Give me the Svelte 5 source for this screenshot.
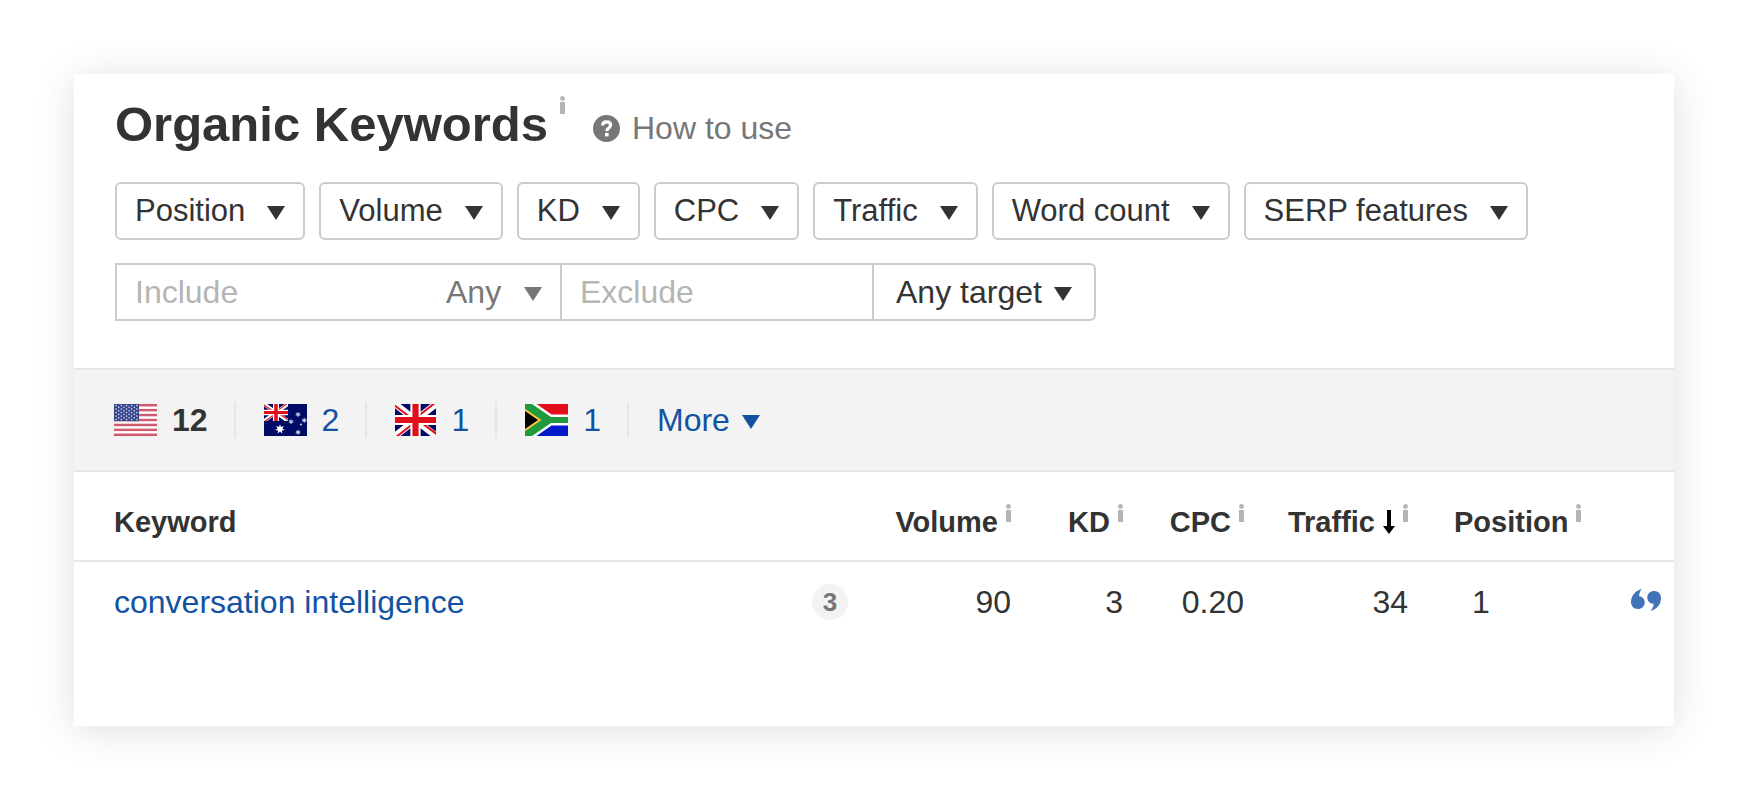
<script lang="ts">
  const filters = ['Position', 'Volume', 'KD', 'CPC', 'Traffic', 'Word count', 'SERP features']

  const countries = [
    { code: 'us', name: 'United States', count: 12 },
    { code: 'au', name: 'Australia', count: 2 },
    { code: 'gb', name: 'United Kingdom', count: 1 },
    { code: 'za', name: 'South Africa', count: 1 },
  ]

  const columns = ['Volume', 'KD', 'CPC', 'Traffic', 'Position']

  const rows = [
    { keyword: 'conversation intelligence', serp: 3, values: ['90', '3', '0.20', '34', '1'] },
  ]

  let country = $state('us')
  let include = $state('')
  let exclude = $state('')

  const stripes = [0, 2, 4, 6, 8, 10, 12]
  const stars = [0, 1, 2, 3, 4, 5, 6, 7, 8]
</script>

{#snippet caret()}
  <svg class="caret" viewBox="0 0 18 14" aria-hidden="true"><path d="M0 0h18L9 14z" /></svg>
{/snippet}

{#snippet info()}
  <svg class="info" viewBox="0 0 5 18" aria-hidden="true">
    <circle cx="2.5" cy="2.5" r="2.4" />
    <path d="M0 6h5v12H0z" />
  </svg>
{/snippet}

{#snippet unionJack()}
  <path fill="#000b66" d="M0 0h60v48H0z" />
  <path stroke="#fff" stroke-width="10" d="M0 0l60 48M60 0L0 48" />
  <path stroke="#e20f1b" stroke-width="3" d="M-1 2l31 24M29 22L59-2M31 22l31 24M31 26L1 50" />
  <path stroke="#fff" stroke-width="15" d="M30 0v48M0 24h60" />
  <path stroke="#e20f1b" stroke-width="9" d="M30 0v48M0 24h60" />
{/snippet}

{#snippet flag(code: string)}
  {#if code === 'us'}
    <svg class="flag" width="43" height="32" viewBox="0 0 43 32" aria-hidden="true">
      <path fill="#fff" d="M0 0h43v32H0z" />
      {#each stripes as n}
        <rect fill="#d0596b" y={(n * 32) / 13} width="43" height={32 / 13} />
      {/each}
      <path fill="#39458c" d="M0 0h25v17.2H0z" />
      {#each stars as row}
        {#each stars as col}
          {#if (row + col) % 2 === 0}
            <circle fill="#dfe1ee" cx={2.1 + col * 2.6} cy={1.6 + row * 1.75} r="0.8" />
          {/if}
        {/each}
      {/each}
    </svg>
  {:else if code === 'au'}
    <svg class="flag" width="43" height="32" viewBox="0 0 43 32" aria-hidden="true">
      <path fill="#000b66" d="M0 0h43v32H0z" />
      <svg width="24" height="17" viewBox="0 0 60 48" preserveAspectRatio="none">
        {@render unionJack()}
      </svg>
      <path
        fill="#fff"
        d="M16 20.4l1.1 2.7 2.7-1-1.4 2.6 2.5 1.4-2.9.5.2 2.9-2.2-1.9-2.2 1.9.2-2.9-2.9-.5 2.5-1.4-1.4-2.6 2.7 1z"
      />
      <g fill="#b9bdd8">
        <path d="M34 7.6l.7 1.6 1.8-.5-.9 1.5 1.3 1.2-1.8.2-1.1 1.6-1-1.6-1.8-.2 1.3-1.2-.9-1.5 1.7.5z" />
        <path d="M27 14.8l.7 1.6 1.8-.5-.9 1.5 1.3 1.2-1.8.2-1.1 1.6-1-1.6-1.8-.2 1.3-1.2-.9-1.5 1.7.5z" />
        <path d="M40.3 13.5l.7 1.6 1.8-.5-.9 1.5 1.1 1.2-1.6.2-1.1 1.6-1-1.6-1.8-.2 1.3-1.2-.9-1.5 1.7.5z" />
        <path d="M34 25.4l.7 1.6 1.8-.5-.9 1.5 1.3 1.2-1.8.2-1.1 1.6-1-1.6-1.8-.2 1.3-1.2-.9-1.5 1.7.5z" />
        <circle cx="37" cy="20.6" r="1.1" />
        <circle cx="22.6" cy="16" r="1" />
      </g>
    </svg>
  {:else if code === 'gb'}
    <svg class="flag" width="41" height="32" viewBox="0 0 60 48" preserveAspectRatio="none" aria-hidden="true">
      {@render unionJack()}
    </svg>
  {:else}
    <svg class="flag" width="43" height="32" viewBox="0 0 43 32" aria-hidden="true">
      <path fill="#fff" d="M0 0h43v32H0z" />
      <path fill="#e20f1b" d="M11.5 0H43v10.5H26.5z" />
      <path fill="#0318c8" d="M11.5 32H43V21.5H26.5z" />
      <path fill="#1f9a3d" d="M0 0h7l19 13h17v6H26L7 32H0z" />
      <path fill="#fcc93e" d="M0 4.8L16.5 16 0 27.2z" />
      <path fill="#000" d="M0 7l13 9L0 25z" />
    </svg>
  {/if}
{/snippet}

<main>
  <header>
    <div class="title">
      <h1>Organic Keywords</h1>
      {@render info()}
      <a class="help" href="#help">
        <svg width="27" height="27" viewBox="0 0 27 27" aria-hidden="true">
          <circle cx="13.5" cy="13.5" r="13.5" fill="#777" />
          <path
            d="M9.6 10.6c0-2.4 1.6-3.8 4-3.8s4 1.3 4 3.3c0 1.4-.7 2.2-1.9 3-1.2.8-1.9 1.3-1.9 3.1"
            fill="none"
            stroke="#fff"
            stroke-width="3.2"
          />
          <path d="M12 18h3.6v3.4H12z" fill="#fff" />
        </svg>
        How to use
      </a>
    </div>

    <div class="filters">
      {#each filters as filter}
        <button type="button" class="filter" aria-haspopup="true">
          {filter}
          {@render caret()}
        </button>
      {/each}
    </div>

    <div class="search">
      <div class="field include">
        <input type="text" bind:value={include} placeholder="Include" aria-label="Include" />
        <label class="select match">
          <select aria-label="Include match">
            <option>Any</option>
          </select>
          {@render caret()}
        </label>
      </div>
      <div class="field exclude">
        <input type="text" bind:value={exclude} placeholder="Exclude" aria-label="Exclude" />
      </div>
      <label class="select target">
        <select aria-label="Target">
          <option>Any target</option>
        </select>
        {@render caret()}
      </label>
    </div>
  </header>

  <nav>
    {#each countries as { code, name, count }}
      <button
        type="button"
        class="country"
        class:active={country === code}
        aria-label="{name} {count}"
        onclick={() => (country = code)}
      >
        {@render flag(code)}
        {count}
      </button>
    {/each}
    <button type="button" class="more" aria-haspopup="true">
      More
      {@render caret()}
    </button>
  </nav>

  <table>
    <thead>
      <tr>
        <th class="keyword">Keyword</th>
        {#each columns as column}
          <th class={column.toLowerCase()}>
            <span class="heading">
              {column}
              {#if column === 'Traffic'}
                <svg class="sort" viewBox="0 0 12 24" aria-hidden="true">
                  <path d="M4 0h4v16h4L6 24 0 16h4z" />
                </svg>
              {/if}
              {@render info()}
            </span>
          </th>
        {/each}
        <td class="feature"></td>
      </tr>
    </thead>
    <tbody>
      {#each rows as row}
        <tr>
          <td class="keyword">
            <div class="term">
              <a href="#keyword">{row.keyword}</a>
              <span class="badge">{row.serp}</span>
            </div>
          </td>
          {#each row.values as value, i}
            <td class={columns[i].toLowerCase()}>{value}</td>
          {/each}
          <td class="feature">
            <svg width="30" height="22" viewBox="0 0 30 22" aria-hidden="true">
              <path d="M11 0C4.500 1.500 0 6.500 0 13c0 4.200 2.800 7 6.800 7 3.900 0 6.900-2.700 6.900-6.500 0-3.600-2.300-6-5.500-6.300C8.200 4.500 9 2 11 0z" />
              <path d="M19.500 22C26 20 30 15.500 30 9c0-4.200-2.800-7-6.800-7-3.900 0-6.900 2.700-6.900 6.500 0 3.600 2.700 6.200 6.300 6.300C22.500 17.500 21.500 20 19.500 22z" />
            </svg>
          </td>
        </tr>
      {/each}
    </tbody>
  </table>
</main>

<style>
  :global(body) {
    background: #fff;
    margin: 0;
  }

  main {
    background: #fff;
    box-shadow: 0 4px 36px rgba(30, 50, 55, 0.15);
    color: #333;
    font-family: 'Liberation Sans', Arial, sans-serif;
    font-size: 32px;
    line-height: 36px;
    margin: 74px 72px 74px 74px;
    padding-bottom: 84px;
  }

  header {
    padding: 22px 41px 47px;
  }

  button,
  input,
  select {
    appearance: none;
    background: none;
    border: none;
    color: inherit;
    font: inherit;
    margin: 0;
    padding: 0;
  }

  button,
  select {
    cursor: pointer;
  }

  a {
    color: #1252a3;
    text-decoration: none;
  }

  .caret {
    fill: currentColor;
    flex: none;
    height: 14px;
    margin-top: 4px;
    width: 18px;
  }

  .info {
    fill: #b5b5b5;
    flex: none;
    height: 18px;
    width: 5px;
  }

  .title {
    align-items: flex-start;
    display: flex;
    gap: 12px;
  }

  h1 {
    font-size: 49px;
    line-height: 56px;
    margin: 0;
  }

  .help {
    align-items: center;
    color: #777;
    display: flex;
    gap: 12px;
    line-height: 40px;
    margin: 12px 0 0 16px;
  }

  .filters {
    display: flex;
    flex-wrap: wrap;
    gap: 14px;
    margin-top: 30px;
  }

  .filter {
    align-items: center;
    border: 2px solid #ccc;
    border-radius: 6px;
    display: flex;
    font-size: 31px;
    gap: 22px;
    height: 58px;
    padding: 0 18px;
  }

  .search {
    display: flex;
    margin-top: 23px;
  }

  .field,
  .target {
    border: 2px solid #ccc;
    box-sizing: border-box;
    display: flex;
    height: 58px;
  }

  .field {
    border-right: none;
    padding: 0 18px;
  }

  .include {
    width: 445px;
  }

  .exclude {
    width: 312px;
  }

  input {
    flex: 1;
    min-width: 0;
    outline: none;
  }

  input::placeholder {
    color: #b5b5b5;
    opacity: 1;
  }

  .select {
    align-items: center;
    display: flex;
  }

  .match {
    color: #777;
    gap: 22px;
  }

  .target {
    border-radius: 0 6px 6px 0;
    gap: 12px;
    padding: 0 22px;
  }

  nav {
    align-items: center;
    background: #f3f3f3;
    border-bottom: 2px solid #e6e6e6;
    border-top: 2px solid #e6e6e6;
    color: #1252a3;
    display: flex;
    padding: 32px 40px;
  }

  .country {
    align-items: center;
    border-right: 2px solid #e6e6e6;
    display: flex;
    gap: 15px;
    margin-right: 28px;
    padding-right: 26px;
  }

  .active {
    color: #333;
    font-weight: bold;
  }

  .flag {
    display: block;
  }

  .more {
    align-items: center;
    display: flex;
    gap: 12px;
  }

  table {
    border-collapse: collapse;
    table-layout: fixed;
    width: 100%;
  }

  thead tr {
    border-bottom: 2px solid #e6e6e6;
  }

  th,
  td {
    padding: 0;
    text-align: right;
  }

  th {
    font-size: 29px;
    padding: 32px 0 20px;
  }

  tbody td {
    height: 80px;
  }

  th.keyword,
  td.keyword {
    padding-left: 40px;
    text-align: left;
  }

  .volume {
    width: 163px;
  }

  .kd {
    width: 112px;
  }

  .cpc {
    width: 121px;
  }

  .traffic {
    width: 164px;
  }

  .position {
    text-align: left;
    width: 145px;
  }

  th.position {
    padding-left: 46px;
  }

  td.position {
    padding-left: 64px;
  }

  .feature {
    padding-right: 13px;
    width: 62px;
  }

  .feature svg {
    display: block;
    fill: #4272b8;
    margin: 0 0 4px auto;
  }

  .heading {
    align-items: flex-start;
    display: inline-flex;
    gap: 8px;
    vertical-align: top;
  }

  .sort {
    height: 24px;
    margin-top: 6px;
    width: 12px;
  }

  .term {
    align-items: center;
    display: flex;
    justify-content: space-between;
  }

  .badge {
    background: #f3f3f3;
    border-radius: 50%;
    color: #777;
    font-size: 26px;
    font-weight: bold;
    height: 36px;
    text-align: center;
    width: 36px;
  }
</style>
